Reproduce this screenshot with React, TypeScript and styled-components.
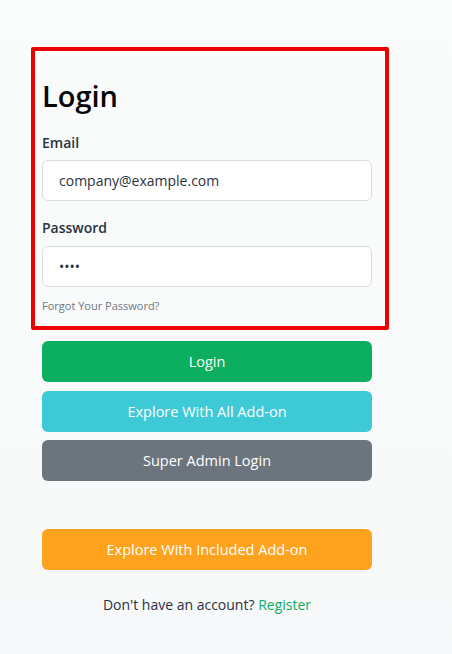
import React from "react";
import styled, { createGlobalStyle } from "styled-components";

const Global = createGlobalStyle`
  html, body { margin: 0; padding: 0; }
  body {
    background: linear-gradient(180deg, #fafbfb 0%, #f7f8f9 100%);
    font-family: "Open Sans", "Noto Sans", sans-serif;
    min-height: 654px;
  }
`;

const Column = styled.div`
  width: 330px;
  margin-left: 42px;
  padding-bottom: 30px;
`;

const Frame = styled.div`
  margin: 47px -17px 0 -11px;
  border: 4px solid #ee0000;
  border-radius: 2px;
  padding: 28px 13px 12px 7px;
`;

const Heading = styled.h2`
  margin: 0 0 18px;
  font-size: 29px;
  line-height: 1.2;
  font-weight: 600;
  color: #060606;
`;

const Label = styled.label<{ $top?: number }>`
  display: block;
  margin: ${(p) => p.$top ?? 0}px 0 7.5px;
  font-size: 14px;
  line-height: 21px;
  font-weight: 600;
  color: #293240;
`;

const Input = styled.input`
  display: block;
  box-sizing: border-box;
  width: 100%;
  height: 41px;
  padding: 0 16px;
  border: 1px solid #d8dde3;
  border-radius: 6px;
  background: #fff;
  font-family: inherit;
  font-size: 14px;
  color: #293240;
  outline: none;
`;

const Forgot = styled.a`
  display: block;
  margin-top: 11px;
  font-size: 11px;
  line-height: 16.5px;
  color: #6f7780;
  text-decoration: none;
`;

const Buttons = styled.div`
  display: flex;
  flex-direction: column;
  gap: 8.5px;
  margin-top: 11px;
`;

const Button = styled.button<{ $bg: string; $top?: number }>`
  height: 41px;
  margin-top: ${(p) => p.$top ?? 0}px;
  border: none;
  border-radius: 6px;
  background: ${(p) => p.$bg};
  color: #fff;
  font-family: inherit;
  font-size: 14.5px;
  font-weight: 500;
`;

const Footer = styled.p`
  margin: 24px 0 0;
  text-align: center;
  font-size: 14px;
  line-height: 21px;
  color: #293240;
`;

const Link = styled.a`
  color: #0caf60;
  text-decoration: none;
`;

export default function App() {
  return (
    <>
      <Global />
      <Column>
        <Frame>
          <Heading>Login</Heading>
          <Label>Email</Label>
          <Input type="email" defaultValue="company@example.com" />
          <Label $top={16}>Password</Label>
          <Input type="password" defaultValue="1234" />
          <Forgot href="#">Forgot Your Password?</Forgot>
        </Frame>
        <Buttons>
          <Button $bg="#0caf60">Login</Button>
          <Button $bg="#3ec9d6">Explore With All Add-on</Button>
          <Button $bg="#6c757d">Super Admin Login</Button>
          <Button $bg="#ffa21d" $top={39.5}>Explore With Included Add-on</Button>
        </Buttons>
        <Footer>
          Don't have an account? <Link href="#">Register</Link>
        </Footer>
      </Column>
    </>
  );
}
